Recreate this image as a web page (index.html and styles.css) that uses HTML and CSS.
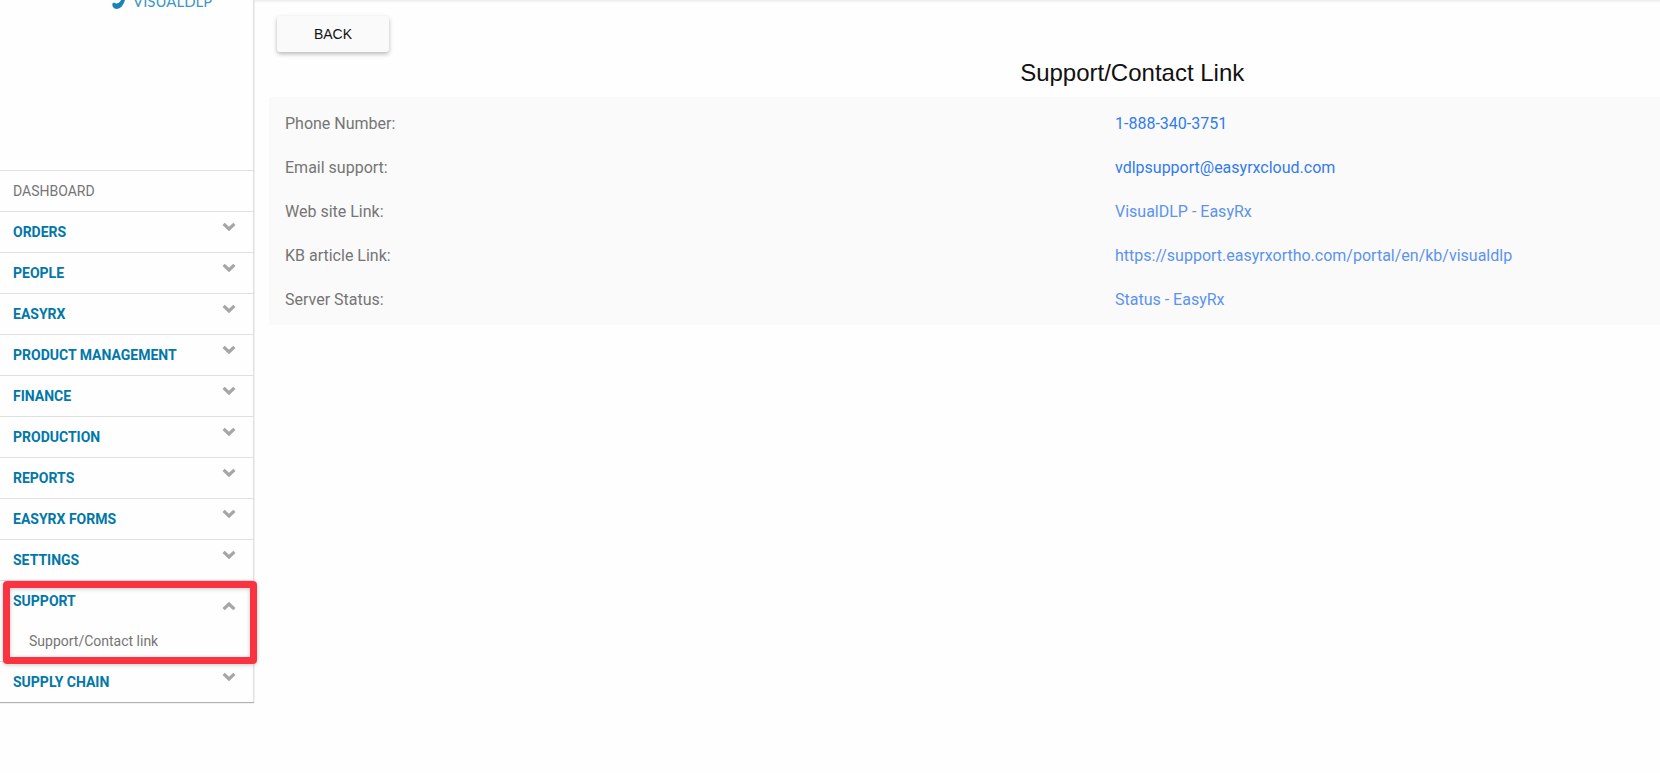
FILE: index.html
```html
<!DOCTYPE html>
<html lang="en">
<head>
    <meta charset="UTF-8">
    <meta name="viewport" content="width=device-width, initial-scale=1.0">
    <title>VisualDLP - Support/Contact Link</title>
    <link rel="stylesheet" href="styles.css">
</head>
<body>
    <svg class="sprite" aria-hidden="true">
        <symbol id="chevron" viewBox="0 0 14 10">
            <path d="M1.6 1.8 L7 7 L12.4 1.8" fill="none" stroke="currentColor" stroke-width="3.2"/>
        </symbol>
    </svg>

    <aside class="sidebar">
        <div class="logo">
            <svg class="logo-mark" viewBox="0 0 14 10" aria-hidden="true">
                <path d="M13 0 C11.5 5 8.5 9 4.5 9 C1.8 9 0.3 7 0.3 4.6 C0.3 3.2 1.6 2.5 3 3 C4 3.6 5 3.8 6.2 3.1 C7.5 2.3 8.5 1.2 9 0 Z" fill="#1a82b8"/>
            </svg>
            <span class="logo-text">VISUALDLP</span>
        </div>

        <nav class="menu">
            <a class="menu-item plain" href="#">DASHBOARD</a>
            <button class="menu-item">ORDERS <svg class="chevron"><use href="#chevron"/></svg></button>
            <button class="menu-item">PEOPLE <svg class="chevron"><use href="#chevron"/></svg></button>
            <button class="menu-item">EASYRX <svg class="chevron"><use href="#chevron"/></svg></button>
            <button class="menu-item">PRODUCT MANAGEMENT <svg class="chevron"><use href="#chevron"/></svg></button>
            <button class="menu-item">FINANCE <svg class="chevron"><use href="#chevron"/></svg></button>
            <button class="menu-item">PRODUCTION <svg class="chevron"><use href="#chevron"/></svg></button>
            <button class="menu-item">REPORTS <svg class="chevron"><use href="#chevron"/></svg></button>
            <button class="menu-item">EASYRX FORMS <svg class="chevron"><use href="#chevron"/></svg></button>
            <button class="menu-item">SETTINGS <svg class="chevron"><use href="#chevron"/></svg></button>
            <div class="menu-group">
                <button class="menu-item open" aria-expanded="true">SUPPORT <svg class="chevron"><use href="#chevron"/></svg></button>
                <a class="submenu-item" href="#">Support/Contact link</a>
                <div class="highlight"></div>
            </div>
            <button class="menu-item">SUPPLY CHAIN <svg class="chevron"><use href="#chevron"/></svg></button>
        </nav>
    </aside>

    <main class="content">
        <button class="back-button">BACK</button>
        <h1>Support/Contact Link</h1>
        <div class="panel">
            <table class="contact-table">
                <tr>
                    <th scope="row">Phone Number:</th>
                    <td><a class="strong" href="tel:1-888-340-3751">1-888-340-3751</a></td>
                </tr>
                <tr>
                    <th scope="row">Email support:</th>
                    <td><a class="strong" href="mailto:vdlpsupport@easyrxcloud.com">vdlpsupport@easyrxcloud.com</a></td>
                </tr>
                <tr>
                    <th scope="row">Web site Link:</th>
                    <td><a href="#">VisualDLP - EasyRx</a></td>
                </tr>
                <tr>
                    <th scope="row">KB article Link:</th>
                    <td><a href="#">https://support.easyrxortho.com/portal/en/kb/visualdlp</a></td>
                </tr>
                <tr>
                    <th scope="row">Server Status:</th>
                    <td><a href="#">Status - EasyRx</a></td>
                </tr>
            </table>
        </div>
    </main>
</body>
</html>
```
FILE: styles.css
```css
* {
    box-sizing: border-box;
}

body {
    margin: 0;
    display: flex;
    align-items: flex-start;
    min-height: 100vh;
    overflow: hidden;
    background: #fefefe;
    font-family: Roboto, sans-serif;
    color: #757575;
}

a {
    text-decoration: none;
}

.sprite {
    display: none;
}

/* Sidebar */
.sidebar {
    flex: 0 0 254px;
    border-right: 1px solid #e0e0e0;
    box-shadow: 0 1px 1px rgba(0, 0, 0, 0.3);
    background: #fefefe;
}

.logo {
    display: flex;
    align-items: flex-start;
    gap: 7px;
    height: 170px;
    padding-left: 112px;
    overflow: hidden;
}

.logo-mark {
    width: 14px;
    height: 10px;
}

.logo-text {
    margin-top: -8px;
    font-family: Lato, sans-serif;
    font-size: 15px;
    line-height: 18px;
    color: #4196c4;
}

.menu {
    display: flex;
    flex-direction: column;
}

.menu-item {
    display: flex;
    align-items: center;
    justify-content: space-between;
    height: 41px;
    padding: 0 17px 0 13px;
    border: 0;
    border-top: 1px solid #e0e0e0;
    background: none;
    font-family: inherit;
    font-size: 14px;
    font-weight: 700;
    color: #0277a8;
    text-align: left;
    cursor: pointer;
}

.menu-item.plain {
    font-weight: 400;
    color: #757575;
}

.chevron {
    width: 14px;
    height: 10px;
    margin-bottom: 10px;
    color: #a6a6a6;
}

.menu-item.open .chevron {
    margin: 10px 0 0;
    transform: rotate(180deg);
}

.menu-group {
    position: relative;
}

.menu-group .menu-item {
    width: 100%;
}

.submenu-item {
    display: block;
    padding-left: 29px;
    font-size: 14px;
    line-height: 40px;
    color: #757575;
}

.highlight {
    position: absolute;
    inset: 1px -4px -3px 3px;
    border: 7px solid #fb3340;
    border-radius: 4px;
    box-shadow: 0 1px 4px rgba(0, 0, 0, 0.2), inset 0 1px 4px rgba(0, 0, 0, 0.2);
    pointer-events: none;
}

/* Content runs wider than the window */
.content {
    flex: 0 0 calc(104vw + 15px);
    padding-left: 15px;
    box-shadow: inset 0 3px 3px -2px rgba(0, 0, 0, 0.1);
}

.back-button {
    display: block;
    width: 112px;
    height: 36px;
    margin: 16px 0 0 8px;
    padding: 0;
    border: 0;
    border-radius: 3px;
    background: #fafafa;
    box-shadow: 0 2px 4px rgba(0, 0, 0, 0.28);
    font-family: "Liberation Sans", Arial, sans-serif;
    font-size: 14px;
    color: #111;
    cursor: pointer;
}

h1 {
    margin: 6px 0 9px;
    font-family: "Liberation Sans", Arial, sans-serif;
    font-size: 24px;
    font-weight: 400;
    line-height: 30px;
    text-align: center;
    color: #111;
}

.panel {
    padding: 4px 16px;
    background: #fafafa;
}

.contact-table {
    border-collapse: collapse;
    font-size: 16px;
}

.contact-table th,
.contact-table td {
    height: 44px;
    padding: 0;
    font-weight: 400;
    text-align: left;
}

.contact-table th {
    width: 50vw;
}

.contact-table a {
    color: #5c93f0;
}

.contact-table a.strong {
    color: #327af0;
}
```
